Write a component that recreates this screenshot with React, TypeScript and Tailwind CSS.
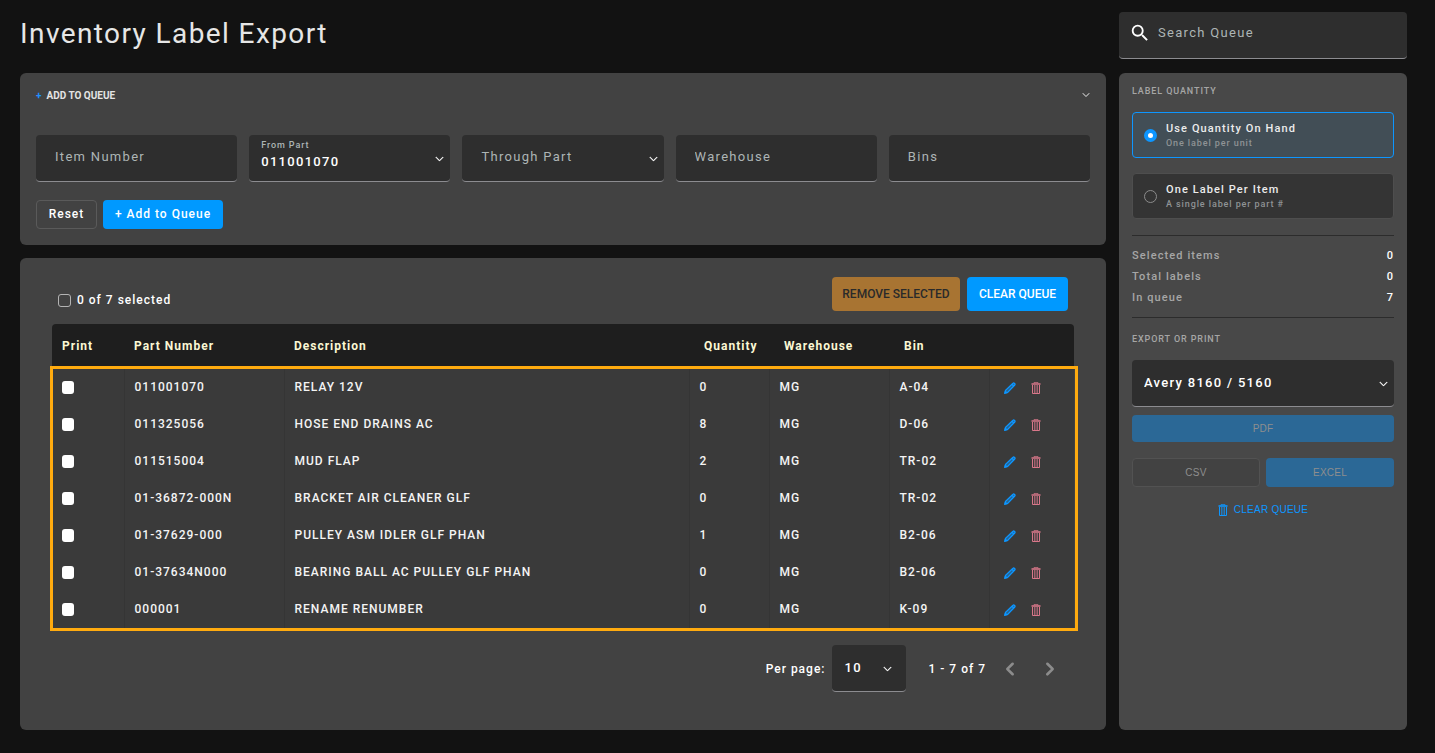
import { useState } from "react";
import type { ReactNode, SelectHTMLAttributes } from "react";
import clsx from "clsx";
import { BsChevronDown, BsChevronLeft, BsChevronRight } from "react-icons/bs";
import { MdSearch } from "react-icons/md";

type QueueItem = {
  part: string;
  description: string;
  quantity: number;
  warehouse: string;
  bin: string;
};

const QUEUE: QueueItem[] = [
  { part: "011001070", description: "RELAY 12V", quantity: 0, warehouse: "MG", bin: "A-04" },
  { part: "011325056", description: "HOSE END DRAINS AC", quantity: 8, warehouse: "MG", bin: "D-06" },
  { part: "011515004", description: "MUD FLAP", quantity: 2, warehouse: "MG", bin: "TR-02" },
  { part: "01-36872-000N", description: "BRACKET AIR CLEANER GLF", quantity: 0, warehouse: "MG", bin: "TR-02" },
  { part: "01-37629-000", description: "PULLEY ASM IDLER GLF PHAN", quantity: 1, warehouse: "MG", bin: "B2-06" },
  { part: "01-37634N000", description: "BEARING BALL AC PULLEY GLF PHAN", quantity: 0, warehouse: "MG", bin: "B2-06" },
  { part: "000001", description: "RENAME RENUMBER", quantity: 0, warehouse: "MG", bin: "K-09" },
];

const field =
  "h-[47px] w-full appearance-none rounded border-b border-[#8c8c90] bg-[#2e2e2e] text-[13px] tracking-widest outline-none";

function PencilIcon() {
  return (
    <svg viewBox="0 0 12 12" className="size-3" fill="none" stroke="currentColor" aria-hidden="true">
      <path
        d="M1 11l.6-2.6L9 1.2a.9.9 0 0 1 1.3 0l.5.5a.9.9 0 0 1 0 1.3L3.6 10.4z"
        fill="currentColor"
        fillOpacity=".45"
        strokeWidth="1.3"
      />
      <path d="M8 2.2l1.8 1.8M1 11l1.6-.4-1.2-1.2z" strokeWidth="1.4" />
    </svg>
  );
}

function TrashIcon() {
  return (
    <svg viewBox="0 0 10 12" className="h-3 w-2.5" fill="none" stroke="currentColor" aria-hidden="true">
      <path d="M3 1.5V.5h4v1" opacity=".7" />
      <path d="M.5 2h9" strokeWidth="1.6" />
      <path d="M1.5 3v8.5h7V3" />
      <path d="M3.5 3v8M5 3v8M6.5 3v8" opacity=".65" />
    </svg>
  );
}

function TextField({ id, label }: { id: string; label: string }) {
  return (
    <input
      id={id}
      type="text"
      aria-label={label}
      placeholder={label}
      className={clsx(field, "px-[19px] pb-[3px] text-white placeholder:text-[#adb5b5]")}
    />
  );
}

function SelectBox({
  className,
  children,
  ...props
}: SelectHTMLAttributes<HTMLSelectElement>) {
  return (
    <div className="relative">
      <select {...props} className={clsx(field, className)}>
        {children}
      </select>
      <BsChevronDown
        size={9}
        strokeWidth={1}
        className="pointer-events-none absolute top-1/2 right-1.5 -translate-y-1/2 text-white"
      />
    </div>
  );
}

function SectionTitle({ children }: { children: ReactNode }) {
  return (
    <h2 className="text-[9px] leading-4 font-medium tracking-widest text-[#a6a6a6] uppercase">
      {children}
    </h2>
  );
}

function RadioCard({
  title,
  hint,
  checked,
  onChange,
}: {
  title: string;
  hint: string;
  checked: boolean;
  onChange: () => void;
}) {
  return (
    <label
      className={clsx(
        "flex h-[46px] items-center gap-[9px] rounded border px-[11px]",
        checked ? "border-[#0d96ff] bg-[#424e56]" : "border-[#4e4e4e] bg-[#343434]"
      )}
    >
      <input
        type="radio"
        name="label-quantity"
        checked={checked}
        onChange={onChange}
        className={clsx(
          "size-[13px] shrink-0 appearance-none rounded-full",
          checked ? "border-4 border-[#0d96ff] bg-white" : "border border-[#8c8c8c]"
        )}
      />
      <span className="flex flex-col pt-0.5">
        <span className="text-[11px] leading-[14px] font-medium tracking-widest text-[#ececec]">
          {title}
        </span>
        <span className="text-[9px] leading-[14px] font-medium tracking-widest text-[#8f9395]">
          {hint}
        </span>
      </span>
    </label>
  );
}

function StatRow({ label, value }: { label: string; value: number }) {
  return (
    <div className="flex h-[21px] items-center justify-between text-[11px] font-medium tracking-widest">
      <dt className="text-[#a6a6a6]">{label}</dt>
      <dd className="text-white">{value}</dd>
    </div>
  );
}

function AddToQueue() {
  return (
    <section className="rounded-md bg-[#424242] px-4 pt-3.5 pb-4">
      <div className="flex h-4 items-center justify-between">
        <h2 className="flex items-center gap-[5px] text-[10px] font-bold text-[#e4e4e4]">
          <span className="text-[#1f8fff]">+</span> ADD TO QUEUE
        </h2>
        <button type="button" aria-label="Collapse" className="text-[#a0a0a0]">
          <BsChevronDown size={8} strokeWidth={2} />
        </button>
      </div>

      <form className="mt-8" onSubmit={(e) => e.preventDefault()}>
        <div className="grid grid-cols-5 gap-3">
          <TextField id="item-number" label="Item Number" />
          <div className="relative">
            <label
              htmlFor="from-part"
              className="pointer-events-none absolute top-1 left-3 z-10 text-[9px] leading-3 font-medium tracking-widest text-[#adb5b5]"
            >
              From Part
            </label>
            <SelectBox
              id="from-part"
              defaultValue="011001070"
              className="pt-2 pr-6 pl-3 font-medium text-white"
            >
              {QUEUE.map((item) => (
                <option key={item.part}>{item.part}</option>
              ))}
            </SelectBox>
          </div>
          <SelectBox
            aria-label="Through Part"
            className="pr-6 pb-[3px] pl-[19px] text-[#adb5b5]"
            defaultValue=""
          >
            <option value="">Through Part</option>
            {QUEUE.map((item) => (
              <option key={item.part}>{item.part}</option>
            ))}
          </SelectBox>
          <TextField id="warehouse" label="Warehouse" />
          <TextField id="bins" label="Bins" />
        </div>
        <div className="mt-[18px] flex gap-1.5 text-xs font-medium tracking-[1px] text-white">
          <button
            type="reset"
            className="h-[29px] w-[61px] rounded-sm border border-[#5a5a5a] pb-0.5"
          >
            Reset
          </button>
          <button type="submit" className="h-[29px] w-[120px] rounded-sm bg-[#0099ff] pb-0.5">
            + Add to Queue
          </button>
        </div>
      </form>
    </section>
  );
}

function QueueTable({
  selected,
  onToggle,
}: {
  selected: string[];
  onToggle: (part: string) => void;
}) {
  return (
    <div className="relative">
      <table className="w-full table-fixed overflow-hidden rounded-t text-left text-xs tracking-[1px]">
        <thead className="h-[45px] bg-[#1e1e1e] text-[#fbf8d4]">
          <tr>
            <th className="w-[72px] pb-0.5 pl-2.5">Print</th>
            <th className="w-[160px] pb-0.5 pl-2.5">Part Number</th>
            <th className="pb-0.5 pl-2.5">Description</th>
            <th className="w-20 pb-0.5 pl-[15px]">Quantity</th>
            <th className="w-[120px] pb-0.5 pl-[15px]">Warehouse</th>
            <th className="w-[100px] pb-0.5 pl-[15px]">Bin</th>
            <th className="w-[85px]" aria-label="Actions" />
          </tr>
        </thead>
        <tbody className="bg-[#3a3a3a] font-medium text-[#f4f4f4]">
          {QUEUE.map((item) => (
            <tr key={item.part} className="h-[37px] divide-x divide-[#353535]">
              <td className="pl-2.5">
                <input
                  type="checkbox"
                  aria-label={`Print ${item.part}`}
                  checked={selected.includes(item.part)}
                  onChange={() => onToggle(item.part)}
                  className="block h-[13px] w-3 appearance-none rounded-[3px] bg-white checked:bg-[#0099ff]"
                />
              </td>
              <td className="pb-0.5 pl-2.5">{item.part}</td>
              <td className="pb-0.5 pl-2.5">{item.description}</td>
              <td className="pb-0.5 pl-2.5">{item.quantity}</td>
              <td className="pb-0.5 pl-2.5">{item.warehouse}</td>
              <td className="pb-0.5 pl-2.5">{item.bin}</td>
              <td className="pl-3.5">
                <div className="flex gap-[15px]">
                  <button type="button" aria-label="Edit" className="text-[#0d96ff]">
                    <PencilIcon />
                  </button>
                  <button type="button" aria-label="Delete" className="text-[#d9778a]">
                    <TrashIcon />
                  </button>
                </div>
              </td>
            </tr>
          ))}
        </tbody>
      </table>
      <div className="pointer-events-none absolute top-[42px] -right-1 -bottom-[3px] -left-0.5 border-3 border-[#ffab0f]" />
    </div>
  );
}

export default function App() {
  const [selected, setSelected] = useState<string[]>([]);
  const [perUnit, setPerUnit] = useState(true);

  const toggle = (part: string) =>
    setSelected((prev) =>
      prev.includes(part) ? prev.filter((p) => p !== part) : [...prev, part]
    );

  const toggleAll = () =>
    setSelected(selected.length === QUEUE.length ? [] : QUEUE.map((q) => q.part));

  return (
    <div className="flex min-h-screen flex-col gap-3.5 bg-[#121212] pt-3 pr-7 pb-[23px] pl-5 font-[family-name:Roboto,sans-serif] text-white">
      <header className="flex items-center justify-between gap-[13px]">
        <h1 className="pb-1 text-[28px] leading-8 tracking-wider text-[#e6e6e6]">
          Inventory Label Export
        </h1>
        <div className="relative w-72">
          <MdSearch size={22} className="absolute top-2.5 left-2.5" />
          <input
            type="search"
            aria-label="Search Queue"
            placeholder="Search Queue"
            className={clsx(field, "pr-3 pb-1.5 pl-[39px] text-white placeholder:text-[#adb5b5]")}
          />
        </div>
      </header>

      <div className="flex flex-1 gap-[13px]">
        <main className="flex min-w-0 flex-1 flex-col gap-[13px]">
          <AddToQueue />

          <section className="flex-1 rounded-md bg-[#424242] px-8 pt-[19px] pb-9">
            <div className="mb-[13px] flex items-end justify-between px-1.5">
              <label className="flex items-center gap-1.5 text-xs leading-[22px] font-medium tracking-[1px]">
                <input
                  type="checkbox"
                  checked={selected.length === QUEUE.length}
                  onChange={toggleAll}
                  className="size-[13px] appearance-none rounded-[3px] border border-[#b4b4b4] checked:bg-[#0099ff]"
                />
                {selected.length} of {QUEUE.length} selected
              </label>
              <div className="flex gap-[7px] text-xs font-medium">
                <button
                  type="button"
                  disabled={selected.length === 0}
                  className="h-[34px] w-32 rounded-sm bg-[#a87432] text-[#2a2a2a]"
                >
                  REMOVE SELECTED
                </button>
                <button type="button" className="h-[34px] w-[101px] rounded-sm bg-[#0099ff]">
                  CLEAR QUEUE
                </button>
              </div>
            </div>

            <QueueTable selected={selected} onToggle={toggle} />

            <div className="mt-[17px] flex items-center justify-end pr-3 text-xs font-medium tracking-[1px]">
              <label htmlFor="per-page" className="mr-[7px]">
                Per page:
              </label>
              <div className="relative w-[74px]">
                <select id="per-page" className={clsx(field, "pl-3")}>
                  <option>10</option>
                  <option>25</option>
                  <option>50</option>
                </select>
                <BsChevronDown
                  size={9}
                  strokeWidth={1}
                  className="pointer-events-none absolute top-1/2 right-3.5 -translate-y-1/2"
                />
              </div>
              <span className="ml-[22px]">1 - 7 of 7</span>
              <div className="ml-3 flex gap-4 text-[#8c8c8c]">
                <button type="button" aria-label="Previous page" className="flex size-6 items-center justify-center">
                  <BsChevronLeft size={14} strokeWidth={2} />
                </button>
                <button type="button" aria-label="Next page" className="flex size-6 items-center justify-center">
                  <BsChevronRight size={14} strokeWidth={2} />
                </button>
              </div>
            </div>
          </section>
        </main>

        <aside className="w-72 rounded-md bg-[#484848] px-[13px] pt-2.5">
          <SectionTitle>Label Quantity</SectionTitle>
          <div className="mt-[13px] flex flex-col gap-[15px]">
            <RadioCard
              title="Use Quantity On Hand"
              hint="One label per unit"
              checked={perUnit}
              onChange={() => setPerUnit(true)}
            />
            <RadioCard
              title="One Label Per Item"
              hint="A single label per part #"
              checked={!perUnit}
              onChange={() => setPerUnit(false)}
            />
          </div>

          <dl className="mt-4 border-y border-[#2c2c2c] pt-2.5 pb-2">
            <StatRow label="Selected items" value={selected.length} />
            <StatRow label="Total labels" value={0} />
            <StatRow label="In queue" value={QUEUE.length} />
          </dl>

          <div className="mt-[13px]">
            <SectionTitle>Export or Print</SectionTitle>
          </div>
          <div className="mt-[13px]">
            <SelectBox aria-label="Label template" className="pr-6 pl-3 font-medium text-white">
              <option>Avery 8160 / 5160</option>
              <option>Avery 5163</option>
            </SelectBox>
          </div>

          <div className="mt-2 font-[family-name:Liberation_Sans,Arial,sans-serif] text-[10px] tracking-wide text-[#8e8e8e]">
            <button type="button" disabled className="h-[27px] w-full rounded-sm bg-[#2b6896]">
              PDF
            </button>
            <div className="mt-4 grid grid-cols-2 gap-1.5">
              <button type="button" disabled className="h-[29px] rounded-sm border border-[#525252] bg-[#424242]">
                CSV
              </button>
              <button type="button" disabled className="h-[29px] rounded-sm bg-[#2b6896]">
                EXCEL
              </button>
            </div>
            <button
              type="button"
              className="mx-auto mt-[15px] flex items-center gap-1.5 text-[#0d96ff]"
            >
              <TrashIcon /> CLEAR QUEUE
            </button>
          </div>
        </aside>
      </div>
    </div>
  );
}
